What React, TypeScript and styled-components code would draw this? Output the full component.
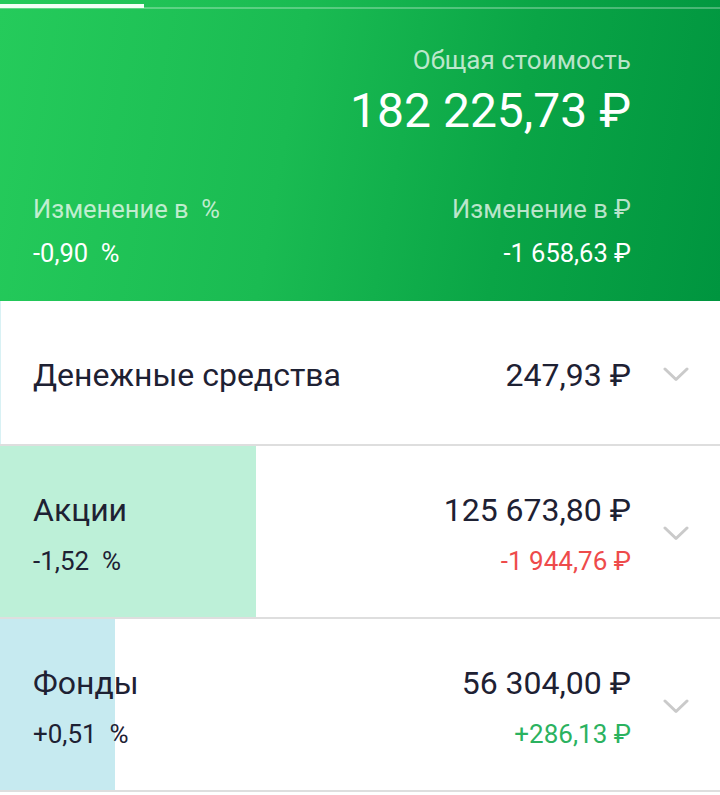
import React from "react";
import styled, { createGlobalStyle } from "styled-components";

const Global = createGlobalStyle`
  html, body { margin: 0; padding: 0; background: #ffffff; }
  body { font-family: Roboto, "Noto Sans", "Liberation Sans", sans-serif; -webkit-font-smoothing: antialiased; }
`;

const Page = styled.div`
  width: 720px;
  display: flex;
  flex-direction: column;
`;

const Header = styled.header`
  background: linear-gradient(100deg, #25cb5b 0%, #1abb52 40%, #0aa546 70%, #00953f 100%);
  height: 301px;
  display: flex;
  flex-direction: column;
  color: #ffffff;
`;

const TabStrip = styled.div`
  height: 9px;
  display: flex;
  align-items: flex-end;
  box-sizing: border-box;
  border-bottom: 2px solid rgba(255, 255, 255, 0.28);
`;

const TabIndicator = styled.div`
  width: 144px;
  height: 4px;
  margin-bottom: -1px;
  background: #f2fff6;
`;

const Total = styled.div`
  display: flex;
  flex-direction: column;
  align-items: flex-end;
  padding: 36px 89px 0 33px;
`;

const Caption = styled.div`
  font-size: 26px;
  line-height: 30px;
  color: rgba(255, 255, 255, 0.72);
`;

const BigValue = styled.div`
  font-size: 48px;
  line-height: 56px;
  margin-top: 8px;
  color: #ffffff;
`;

const ChangeGrid = styled.div`
  display: grid;
  grid-template-columns: 1fr auto;
  row-gap: 16px;
  padding: 56px 89px 0 33px;
`;

const ChangeLabel = styled.div<{ $right?: boolean }>`
  font-size: 25.5px;
  line-height: 28px;
  color: rgba(255, 255, 255, 0.72);
  text-align: ${(p) => (p.$right ? "right" : "left")};
  white-space: pre;
`;

const ChangeValue = styled.div<{ $right?: boolean }>`
  font-size: 25.5px;
  line-height: 28px;
  color: #ffffff;
  text-align: ${(p) => (p.$right ? "right" : "left")};
  white-space: pre;
`;

const Row = styled.div<{ $fill: string; $share: number; $h: number }>`
  height: ${(p) => p.$h}px;
  box-sizing: border-box;
  border-bottom: 2px solid #dedede;
  background: linear-gradient(90deg, ${(p) => p.$fill} ${(p) => p.$share}px, #ffffff ${(p) => p.$share}px);
  display: grid;
  grid-template-columns: 1fr auto 89px;
  align-items: center;
  padding: 4px 0 0 33px;
`;

const Cell = styled.div<{ $right?: boolean }>`
  display: flex;
  flex-direction: column;
  align-items: ${(p) => (p.$right ? "flex-end" : "flex-start")};
  gap: 17px;
`;

const Name = styled.div`
  font-size: 32px;
  line-height: 38px;
  color: #1e2133;
`;

const Amount = styled.div`
  font-size: 32px;
  line-height: 38px;
  color: #1e2133;
`;

const Sub = styled.div<{ $tone?: "neg" | "pos" | "plain" }>`
  font-size: 26px;
  line-height: 30px;
  white-space: pre;
  color: ${(p) => (p.$tone === "neg" ? "#ee4b4b" : p.$tone === "pos" ? "#2bb25f" : "#1e2133")};
`;

const ChevronCell = styled.div`
  display: flex;
  justify-content: center;
  padding-left: 1px;
`;

const Chevron = () => (
  <ChevronCell>
    <svg width="26" height="15" viewBox="0 0 26 15" fill="none">
      <polyline points="2,2 13,12.5 24,2" stroke="#cacaca" strokeWidth="3" strokeLinecap="round" strokeLinejoin="round" />
    </svg>
  </ChevronCell>
);

type Item = {
  name: string;
  amount: string;
  pct?: string;
  change?: string;
  tone?: "neg" | "pos";
  fill: string;
  share: number;
  h: number;
};

const items: Item[] = [
  { name: "Денежные средства", amount: "247,93 ₽", fill: "#d8f1f4", share: 1, h: 145 },
  { name: "Акции", amount: "125 673,80 ₽", pct: "-1,52  %", change: "-1 944,76 ₽", tone: "neg", fill: "#bdf0d8", share: 256, h: 173 },
  { name: "Фонды", amount: "56 304,00 ₽", pct: "+0,51  %", change: "+286,13 ₽", tone: "pos", fill: "#c6eaf0", share: 115, h: 173 },
];

export default function App() {
  return (
    <Page>
      <Global />
      <Header>
        <TabStrip>
          <TabIndicator />
        </TabStrip>
        <Total>
          <Caption>Общая стоимость</Caption>
          <BigValue>182 225,73 ₽</BigValue>
        </Total>
        <ChangeGrid>
          <ChangeLabel>Изменение в  %</ChangeLabel>
          <ChangeLabel $right>Изменение в ₽</ChangeLabel>
          <ChangeValue>-0,90  %</ChangeValue>
          <ChangeValue $right>-1 658,63 ₽</ChangeValue>
        </ChangeGrid>
      </Header>
      {items.map((it) => (
        <Row key={it.name} $fill={it.fill} $share={it.share} $h={it.h}>
          <Cell>
            <Name>{it.name}</Name>
            {it.pct && <Sub>{it.pct}</Sub>}
          </Cell>
          <Cell $right>
            <Amount>{it.amount}</Amount>
            {it.change && <Sub $tone={it.tone}>{it.change}</Sub>}
          </Cell>
          <Chevron />
        </Row>
      ))}
    </Page>
  );
}
